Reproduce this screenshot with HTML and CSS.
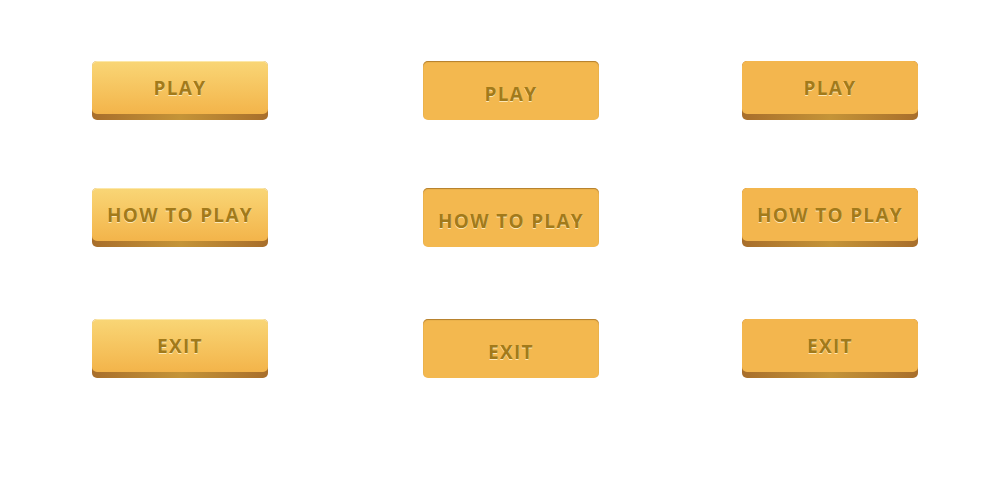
FILE: index.html
```html
<!DOCTYPE html>
<html>
<head>
<meta charset="utf-8">
<link rel="stylesheet" href="styles.css">
</head>
<body>
<div class="board">
  <div class="btn raised"><span class="face">PLAY</span></div>
  <div class="btn pressed"><span class="face">PLAY</span></div>
  <div class="btn flat"><span class="face">PLAY</span></div>
  <div class="btn raised"><span class="face">HOW TO PLAY</span></div>
  <div class="btn pressed"><span class="face">HOW TO PLAY</span></div>
  <div class="btn flat"><span class="face">HOW TO PLAY</span></div>
  <div class="btn raised"><span class="face">EXIT</span></div>
  <div class="btn pressed"><span class="face">EXIT</span></div>
  <div class="btn flat"><span class="face">EXIT</span></div>
</div>
</body>
</html>
```
FILE: styles.css
```css
html, body {
  margin: 0;
  padding: 0;
  background: #ffffff;
}
.board {
  display: grid;
  grid-template-columns: 331px 319px 176px;
  grid-template-rows: 127px 131px 59px;
  padding: 61px 0 0 92px;
}
.btn {
  width: 176px;
  height: 59px;
  border-radius: 5px;
  display: flex;
  flex-direction: column;
}
.face {
  box-sizing: border-box;
  height: 53px;
  border-radius: 5px;
  display: flex;
  align-items: center;
  justify-content: center;
  font-family: "Open Sans", "Liberation Sans", sans-serif;
  font-weight: 700;
  font-size: 19px;
  letter-spacing: 1.3px;
  color: #a27a1a;
  text-shadow: 0 1px 0 rgba(255, 240, 200, 0.85);
}
.raised, .flat {
  background: linear-gradient(90deg, #a86e2b, #c49438 50%, #a86e2b);
}
.raised .face {
  background: linear-gradient(#f9d676, #f3b44a);
  box-shadow: inset 0 1px 0 rgba(255, 250, 220, 0.5);
}
.flat .face {
  background: #f3b64e;
}
.pressed {
  background: #f3b84f;
  box-shadow: inset 0 1px 1px rgba(150, 100, 30, 0.7);
}
.pressed .face {
  height: 59px;
  padding-top: 7px;
}
```
